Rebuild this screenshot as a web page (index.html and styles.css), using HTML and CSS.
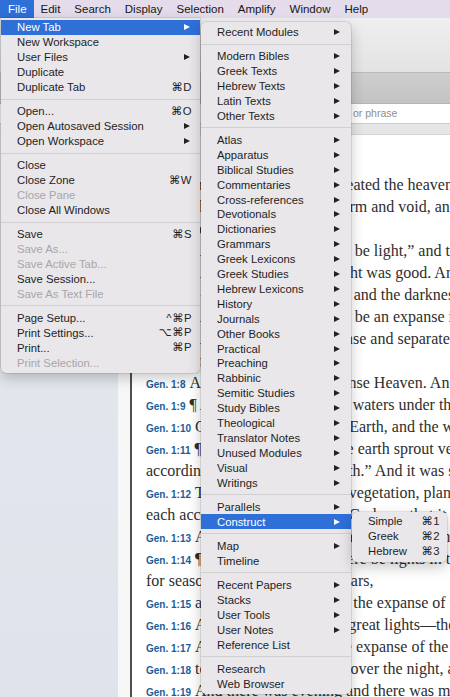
FILE: index.html
```html
<!DOCTYPE html>
<html>
<head>
<meta charset="utf-8">
<link rel="stylesheet" href="styles.css">
</head>
<body>
<div class="screen">
  <div class="menubar">
    <span class="mb on">File</span>
    <span class="mb">Edit</span>
    <span class="mb">Search</span>
    <span class="mb">Display</span>
    <span class="mb">Selection</span>
    <span class="mb">Amplify</span>
    <span class="mb">Window</span>
    <span class="mb">Help</span>
  </div>

  <div class="app">
    <div class="toolbar"></div>
    <div class="band"></div>
    <div class="searchrow">or phrase</div>
    <div class="strip"></div>
    <div class="body">
      <div class="sidebar"></div>
      <div class="gutter"></div>
      <div class="divider"></div>
      <div class="text">
        <div class="ln"><span class="ref">Gen. 1:1</span>In the beginning, God created the heavens and the earth.</div>
        <div class="ln"><span class="ref">Gen. 1:2</span>The earth was without form and void, and darkness was over the face of the deep. And the Spirit of God</div>
        <div class="ln">was hovering.</div>
        <div class="ln"><span class="ref">Gen. 1:3</span>And God said, “Let there be light,” and there was light.</div>
        <div class="ln"><span class="ref">Gen. 1:4</span>And God saw that the light was good. And God separated the light from the darkness.</div>
        <div class="ln"><span class="ref">Gen. 1:5</span>God called the light Day, and the darkness he called Night. And there was evening and there was morning, the first day.</div>
        <div class="ln"><span class="ref">Gen. 1:6</span>And God said, “Let there be an expanse in the midst of the waters, and let it separate the waters from the waters.”</div>
        <div class="ln"><span class="ref">Gen. 1:7</span>And God made the expanse and separated the waters that were under the expanse from the waters that were above</div>
        <div class="ln">the expanse.</div>
        <div class="ln"><span class="ref">Gen. 1:8</span>And God called the expanse Heaven. And there was evening and there was morning, the second day.</div>
        <div class="ln"><span class="ref">Gen. 1:9</span>¶ And God said, “Let the waters under the heavens be gathered together into one place, and let the dry land appear.”</div>
        <div class="ln"><span class="ref">Gen. 1:10</span>God called the dry land Earth, and the waters that were gathered together he called Seas.</div>
        <div class="ln"><span class="ref">Gen. 1:11</span>¶ And God said, “Let the earth sprout vegetation, plants yielding seed, and fruit trees bearing fruit in which is their seed,</div>
        <div class="ln">according to its kind, on the earth.” And it was so.</div>
        <div class="ln"><span class="ref">Gen. 1:12</span>The earth brought forth vegetation, plants yielding seed according to their own kinds, and trees bearing fruit in which is their</div>
        <div class="ln">each according to its kind. And God saw that it was good.</div>
        <div class="ln"><span class="ref">Gen. 1:13</span>And there was evening and there was morning, the third day.</div>
        <div class="ln"><span class="ref">Gen. 1:14</span>¶ And God said, “Let there be lights in the expanse of the heavens to separate the day from the night. And let them be</div>
        <div class="ln">for seasons, and for days and years,</div>
        <div class="ln"><span class="ref">Gen. 1:15</span>and let them be lights in the expanse of the heavens to give light upon the earth.” And it was so.</div>
        <div class="ln"><span class="ref">Gen. 1:16</span>And God made the two great lights—the greater light to rule the day and the lesser light to rule the night—and the stars.</div>
        <div class="ln"><span class="ref">Gen. 1:17</span>And God set them in the expanse of the heavens to give light on the earth,</div>
        <div class="ln"><span class="ref">Gen. 1:18</span>to rule over the day and over the night, and to separate the light from the darkness.</div>
        <div class="ln"><span class="ref">Gen. 1:19</span>And there was evening and there was morning, the fourth day.</div>
      </div>
    </div>
  </div>

  <div class="menu file">
    <div class="mi hl"><span class="lb">New Tab</span><i class="arr"></i></div>
    <div class="mi"><span class="lb">New Workspace</span></div>
    <div class="mi"><span class="lb">User Files</span><i class="arr"></i></div>
    <div class="mi"><span class="lb">Duplicate</span></div>
    <div class="mi"><span class="lb">Duplicate Tab</span><span class="sc">⌘D</span></div>
    <div class="sep"></div>
    <div class="mi"><span class="lb">Open...</span><span class="sc">⌘O</span></div>
    <div class="mi"><span class="lb">Open Autosaved Session</span><i class="arr"></i></div>
    <div class="mi"><span class="lb">Open Workspace</span><i class="arr"></i></div>
    <div class="sep"></div>
    <div class="mi"><span class="lb">Close</span></div>
    <div class="mi"><span class="lb">Close Zone</span><span class="sc">⌘W</span></div>
    <div class="mi dis"><span class="lb">Close Pane</span></div>
    <div class="mi"><span class="lb">Close All Windows</span></div>
    <div class="sep"></div>
    <div class="mi"><span class="lb">Save</span><span class="sc">⌘S</span></div>
    <div class="mi dis"><span class="lb">Save As...</span></div>
    <div class="mi dis"><span class="lb">Save Active Tab...</span></div>
    <div class="mi"><span class="lb">Save Session...</span></div>
    <div class="mi dis"><span class="lb">Save As Text File</span></div>
    <div class="sep"></div>
    <div class="mi"><span class="lb">Page Setup...</span><span class="sc">^⌘P</span></div>
    <div class="mi"><span class="lb">Print Settings...</span><span class="sc">⌥⌘P</span></div>
    <div class="mi"><span class="lb">Print...</span><span class="sc">⌘P</span></div>
    <div class="mi dis"><span class="lb">Print Selection...</span></div>
  </div>

  <div class="menu sub1">
    <div class="mi"><span class="lb">Recent Modules</span><i class="arr"></i></div>
    <div class="sep"></div>
    <div class="mi"><span class="lb">Modern Bibles</span><i class="arr"></i></div>
    <div class="mi"><span class="lb">Greek Texts</span><i class="arr"></i></div>
    <div class="mi"><span class="lb">Hebrew Texts</span><i class="arr"></i></div>
    <div class="mi"><span class="lb">Latin Texts</span><i class="arr"></i></div>
    <div class="mi"><span class="lb">Other Texts</span><i class="arr"></i></div>
    <div class="sep"></div>
    <div class="mi"><span class="lb">Atlas</span><i class="arr"></i></div>
    <div class="mi"><span class="lb">Apparatus</span><i class="arr"></i></div>
    <div class="mi"><span class="lb">Biblical Studies</span><i class="arr"></i></div>
    <div class="mi"><span class="lb">Commentaries</span><i class="arr"></i></div>
    <div class="mi"><span class="lb">Cross-references</span><i class="arr"></i></div>
    <div class="mi"><span class="lb">Devotionals</span><i class="arr"></i></div>
    <div class="mi"><span class="lb">Dictionaries</span><i class="arr"></i></div>
    <div class="mi"><span class="lb">Grammars</span><i class="arr"></i></div>
    <div class="mi"><span class="lb">Greek Lexicons</span><i class="arr"></i></div>
    <div class="mi"><span class="lb">Greek Studies</span><i class="arr"></i></div>
    <div class="mi"><span class="lb">Hebrew Lexicons</span><i class="arr"></i></div>
    <div class="mi"><span class="lb">History</span><i class="arr"></i></div>
    <div class="mi"><span class="lb">Journals</span><i class="arr"></i></div>
    <div class="mi"><span class="lb">Other Books</span><i class="arr"></i></div>
    <div class="mi"><span class="lb">Practical</span><i class="arr"></i></div>
    <div class="mi"><span class="lb">Preaching</span><i class="arr"></i></div>
    <div class="mi"><span class="lb">Rabbinic</span><i class="arr"></i></div>
    <div class="mi"><span class="lb">Semitic Studies</span><i class="arr"></i></div>
    <div class="mi"><span class="lb">Study Bibles</span><i class="arr"></i></div>
    <div class="mi"><span class="lb">Theological</span><i class="arr"></i></div>
    <div class="mi"><span class="lb">Translator Notes</span><i class="arr"></i></div>
    <div class="mi"><span class="lb">Unused Modules</span><i class="arr"></i></div>
    <div class="mi"><span class="lb">Visual</span><i class="arr"></i></div>
    <div class="mi"><span class="lb">Writings</span><i class="arr"></i></div>
    <div class="sep"></div>
    <div class="mi"><span class="lb">Parallels</span><i class="arr"></i></div>
    <div class="mi hl"><span class="lb">Construct</span><i class="arr"></i></div>
    <div class="sep"></div>
    <div class="mi"><span class="lb">Map</span><i class="arr"></i></div>
    <div class="mi"><span class="lb">Timeline</span></div>
    <div class="sep"></div>
    <div class="mi"><span class="lb">Recent Papers</span><i class="arr"></i></div>
    <div class="mi"><span class="lb">Stacks</span><i class="arr"></i></div>
    <div class="mi"><span class="lb">User Tools</span><i class="arr"></i></div>
    <div class="mi"><span class="lb">User Notes</span><i class="arr"></i></div>
    <div class="mi"><span class="lb">Reference List</span></div>
    <div class="sep"></div>
    <div class="mi"><span class="lb">Research</span></div>
    <div class="mi"><span class="lb">Web Browser</span></div>
  </div>

  <div class="menu sub2">
    <div class="mi"><span class="lb">Simple</span><span class="sc">⌘1</span></div>
    <div class="mi"><span class="lb">Greek</span><span class="sc">⌘2</span></div>
    <div class="mi"><span class="lb">Hebrew</span><span class="sc">⌘3</span></div>
  </div>
</div>
</body>
</html>
```

FILE: styles.css
```css
* { box-sizing: border-box; }
html, body { margin: 0; padding: 0; }
body { width: 450px; height: 697px; overflow: hidden; background: #fff; }

.screen {
  position: relative;
  width: 450px;
  height: 697px;
  overflow: hidden;
  font-family: "Liberation Sans", Arial, "DejaVu Sans", sans-serif;
}

/* ---------- menubar ---------- */
.menubar {
  display: flex;
  height: 18px;
  background: #e4dcea;
  color: #161616;
  font-size: 11.5px;
}
.mb {
  display: flex;
  align-items: center;
  padding: 0 7px;
  height: 18px;
}
.mb.on {
  background: #2e6fd8;
  color: #fff;
  padding-left: 8px;
}

/* ---------- app behind ---------- */
.app {
  display: flex;
  flex-direction: column;
  height: 679px;
}
.toolbar {
  height: 55px;
  background: linear-gradient(#efefef, #e3e3e3);
  border-bottom: 1px solid #b9b9b9;
}
.band {
  height: 30px;
  background: linear-gradient(#cecece, #c3c3c3);
}
.searchrow {
  height: 20px;
  background: #fff;
  border-top: 1px solid #b4b4b4;
  padding-left: 353px;
  font-size: 10.5px;
  line-height: 18px;
  color: #8e8e8e;
}
.strip {
  height: 12px;
  background: #e6e6e6;
  border-top: 1px solid #cfcfcf;
  border-bottom: 1px solid #d3d3d3;
}
.body {
  flex: 1;
  display: flex;
  min-height: 0;
}
.sidebar {
  width: 118px;
  background: linear-gradient(#e4e8ef, #dfe4ec);
}
.gutter {
  width: 12px;
  background: #f7f7f7;
}
.divider {
  width: 2px;
  background: #4e4e4e;
}
.text {
  flex: 1;
  min-width: 0;
  background: #fff;
  padding: 39px 0 0 14px;
  overflow: hidden;
}
.ln {
  height: 22px;
  line-height: 22px;
  white-space: nowrap;
  font-family: "Liberation Serif", "Times New Roman", serif;
  font-size: 16px;
  color: #2e2e2e;
}
.ref {
  font-family: "Liberation Sans", Arial, sans-serif;
  font-weight: bold;
  font-size: 10px;
  color: #1d5d98;
  margin-right: 4px;
}

/* ---------- menus ---------- */
.menu {
  position: absolute;
  background: #e9e7ea;
  color: #1e1e1e;
  font-size: 11.3px;
  padding: 2px 0 3px;
  box-shadow: 0 0 0 0.5px rgba(0, 0, 0, 0.18), 0 5px 14px rgba(0, 0, 0, 0.22);
}
.file {
  left: 1px;
  top: 18px;
  width: 199px;
  border-radius: 0 0 5px 5px;
}
.sub1 {
  left: 201px;
  top: 22px;
  width: 150px;
  padding-top: 2.5px;
  border-radius: 5px;
}
.sub2 {
  left: 352px;
  top: 512px;
  width: 95px;
  border-radius: 5px;
}

.mi {
  display: flex;
  align-items: center;
  height: 14.9px;
  padding: 0 8px 0 16px;
  white-space: nowrap;
}
.sub2 .mi { padding-right: 7px; }
.lb { flex: 1; }
.sc {
  font-family: "Liberation Sans", "DejaVu Sans", sans-serif;
  letter-spacing: 0.5px;
}
.arr {
  width: 0;
  height: 0;
  border-left: 6px solid #222;
  border-top: 3.5px solid transparent;
  border-bottom: 3.5px solid transparent;
  margin-right: 2px;
}
.sub1 .arr { margin-right: 3px; }

.hl { background: #2e6fd8; color: #fff; }
.hl .arr { border-left-color: #fff; }
.dis { color: #a8a6a9; }

.sep {
  height: 1px;
  margin: 4.2px 0;
  background: #d1cfd2;
}
```
